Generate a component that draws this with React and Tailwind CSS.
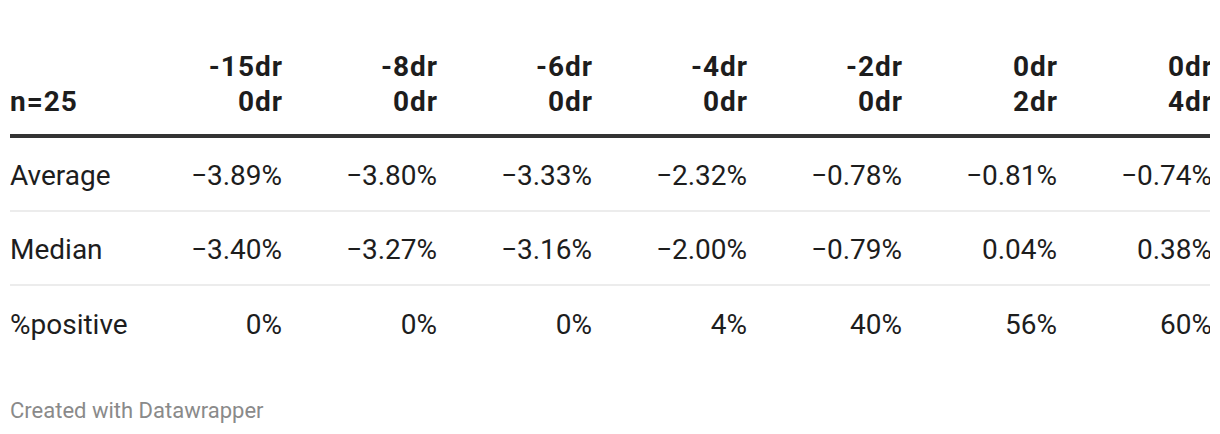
export default function App() {
  const cols = [
    ["-15dr", "0dr"],
    ["-8dr", "0dr"],
    ["-6dr", "0dr"],
    ["-4dr", "0dr"],
    ["-2dr", "0dr"],
    ["0dr", "2dr"],
    ["0dr", "4dr"],
  ];
  const rows = [
    ["Average", ["−3.89%", "−3.80%", "−3.33%", "−2.32%", "−0.78%", "−0.81%", "−0.74%"]],
    ["Median", ["−3.40%", "−3.27%", "−3.16%", "−2.00%", "−0.79%", "0.04%", "0.38%"]],
    ["%positive", ["0%", "0%", "0%", "4%", "40%", "56%", "60%"]],
  ];
  return (
    <div
      className="w-[1220px] h-[434px] bg-white px-[10px] pt-[49px]"
      style={{ fontFamily: "Roboto, 'Liberation Sans', sans-serif" }}
    >
      <div className="w-[1200px] overflow-hidden">
        <div className="w-[1213px]">
          <div className="grid grid-cols-[117px_repeat(7,155px)] items-end border-b-[4px] border-[#333333] pb-[15px] text-[28px] font-bold leading-[35px] tracking-[1px] text-[#1d1d1d]">
            <div>n=25</div>
            {cols.map((c, i) => (
              <div key={i} className="text-right -mr-[1px]">
                <div>{c[0]}</div>
                <div>{c[1]}</div>
              </div>
            ))}
          </div>
          {rows.map((r, ri) => (
            <div
              key={ri}
              className={`grid grid-cols-[117px_repeat(7,155px)] items-center h-[74px] pt-[3px] text-[28px] text-[#1d1d1d] ${ri < 2 ? "border-b-2 border-[#ececec]" : ""}`}
            >
              <div className="whitespace-nowrap">{r[0]}</div>
              {r[1].map((v, i) => (
                <div key={i} className="text-right whitespace-nowrap">
                  {v}
                </div>
              ))}
            </div>
          ))}
        </div>
      </div>
      <div className="mt-[38px] text-[22px] text-[#8a8a8a] leading-[26px]">Created with Datawrapper</div>
    </div>
  );
}
